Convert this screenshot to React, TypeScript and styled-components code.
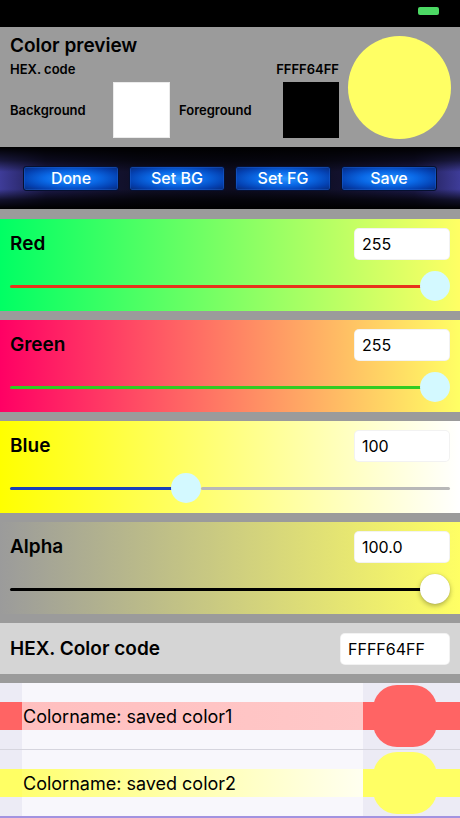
import React from "react";
import styled, { createGlobalStyle } from "styled-components";

const Global = createGlobalStyle`
  html, body { margin: 0; padding: 0; background: #9b9b9b; }
  body { font-family: Inter, "Noto Sans", sans-serif; -webkit-font-smoothing: antialiased; color: #000; }
  * { box-sizing: border-box; }
`;

const Screen = styled.div`
  width: 460px;
  height: 818px;
  overflow: hidden;
  display: flex;
  flex-direction: column;
  background: #9b9b9b;
`;

const StatusBar = styled.div`
  height: 27px;
  flex: none;
  background: #000;
  display: flex;
  justify-content: flex-end;
  align-items: flex-start;
  padding: 7px 21px 0 0;
`;

const Battery = styled.div`
  width: 21px;
  height: 8px;
  border-radius: 2px;
  background: #4cd964;
`;

const Preview = styled.section`
  height: 120px;
  flex: none;
  display: flex;
  align-items: center;
  padding: 0 9px 0 10px;
  gap: 9px;
  background: #9b9b9b;
`;

const PreviewInfo = styled.div`
  width: 329px;
  align-self: stretch;
  display: flex;
  flex-direction: column;
  padding-top: 7px;
`;

const PreviewTitle = styled.div`
  font-size: 19px;
  font-weight: 600;
  line-height: 23px;
`;

const HexRow = styled.div`
  margin-top: 4px;
  display: flex;
  justify-content: space-between;
  font-size: 13px;
  font-weight: 600;
  line-height: 16px;
`;

const SwatchRow = styled.div`
  margin-top: 5px;
  height: 56px;
  display: flex;
  align-items: center;
`;

const SwatchLabel = styled.div<{ $w: number; $ml?: number }>`
  width: ${(p) => p.$w}px;
  margin-left: ${(p) => p.$ml ?? 0}px;
  font-size: 13px;
  font-weight: 600;
`;

const Swatch = styled.div<{ $c: string; $w: number }>`
  width: ${(p) => p.$w}px;
  height: 56px;
  background: ${(p) => p.$c};
  border: 1px solid rgba(0, 0, 0, 0.08);
`;

const BigCircle = styled.div`
  width: 103px;
  height: 103px;
  border-radius: 50%;
  background: #ffff64;
`;

const Toolbar = styled.div`
  height: 62px;
  flex: none;
  display: flex;
  gap: 10px;
  padding: 19px 23px 0;
  background:
    linear-gradient(to bottom, #000 0%, rgba(0,0,0,0.6) 22%, rgba(0,0,0,0) 40%, rgba(0,0,0,0) 68%, rgba(0,0,0,0.7) 85%, #000 100%),
    linear-gradient(to right, #3e3c98 0%, #1c1a4a 10%, #100f26 30%, #0d0c20 50%, #100f26 70%, #1c1a4a 90%, #3e3c98 100%);
`;

const ToolButton = styled.button`
  width: 96px;
  height: 25px;
  padding: 0;
  border: 1px solid #061030;
  border-radius: 3px;
  background: radial-gradient(ellipse at center, #2a95ff 0%, #0a6ae8 40%, #0440b0 75%, #082a78 100%);
  box-shadow: inset 0 0 0 1px rgba(40, 110, 220, 0.35);
  color: #ffffff;
  font-family: Inter, "Noto Sans", sans-serif;
  font-size: 16px;
  font-weight: 500;
  line-height: 23px;
`;

const Content = styled.div`
  flex: 1;
  display: flex;
  flex-direction: column;
  gap: 9px;
  padding-top: 10px;
`;

const SliderSection = styled.section<{ $bg: string }>`
  height: 92px;
  flex: none;
  background: ${(p) => p.$bg};
  padding: 9px 10px 0;
  display: flex;
  flex-direction: column;
`;

const SectionHeader = styled.div`
  height: 32px;
  display: flex;
  align-items: center;
  justify-content: space-between;
`;

const Label = styled.div`
  font-size: 19px;
  font-weight: 600;
  line-height: 24px;
`;

const ValueInput = styled.input<{ $w: number }>`
  width: ${(p) => p.$w}px;
  height: 32px;
  border: 1px solid rgba(0, 0, 0, 0.05);
  border-radius: 5px;
  background: #fff;
  padding: 0 7px;
  font-family: Inter, "Noto Sans", sans-serif;
  font-size: 16px;
  color: #000;
  outline: none;
`;

const Slider = styled.div`
  margin-top: 11px;
  height: 30px;
  display: flex;
  align-items: center;
`;

const Track = styled.div<{ $c: string; $grow?: boolean }>`
  height: 3px;
  border-radius: 1.5px;
  background: ${(p) => p.$c};
  flex: ${(p) => (p.$grow ? "1" : "none")};
`;

const Thumb = styled.div<{ $c: string; $shadow?: boolean }>`
  width: 30px;
  height: 30px;
  flex: none;
  border-radius: 50%;
  background: ${(p) => p.$c};
  box-shadow: ${(p) => (p.$shadow ? "0 2px 5px rgba(0,0,0,0.3), 0 0 1px rgba(0,0,0,0.2)" : "none")};
`;

const HexSection = styled.section`
  height: 51px;
  flex: none;
  background: #d5d5d5;
  padding: 0 10px;
  display: flex;
  align-items: center;
  justify-content: space-between;
`;

const List = styled.div`
  flex: 1;
  display: flex;
  flex-direction: column;
  background: #edecf5;
  border-bottom: 2px solid #a393e0;
`;

const Row = styled.div`
  height: 66px;
  flex: none;
  display: grid;
  grid-template-columns: 22px 341px 97px;
`;

const Separator = styled.div`
  height: 1px;
  flex: none;
  background: #d6d5de;
`;

const band = (c: string) =>
  `linear-gradient(to bottom, transparent 19px, ${c} 19px, ${c} 47px, transparent 47px)`;

const EdgeCell = styled.div<{ $c: string }>`
  background: ${(p) => band(p.$c)}, #ecebf5;
`;

const NameCell = styled.div<{ $band: string }>`
  display: flex;
  align-items: center;
  padding-left: 1px;
  font-size: 18px;
  font-weight: 400;
  background:
    linear-gradient(to bottom, #f8f7fc 19px, transparent 19px, transparent 47px, #f8f7fc 47px),
    ${(p) => p.$band};
`;

const SwatchCell = styled.div<{ $c: string }>`
  padding: 2px 0 0 10px;
  background: ${(p) => band(p.$c)}, #ecebf5;
`;

const RowSwatch = styled.div<{ $c: string }>`
  width: 64px;
  height: 62px;
  border-radius: 24px;
  background: ${(p) => p.$c};
`;

type SliderDef = {
  label: string;
  value: number;
  max: number;
  text: string;
  bg: string;
  min: string;
  maxColor: string;
  thumb: string;
  shadow?: boolean;
};

const sliders: SliderDef[] = [
  { label: "Red", value: 255, max: 255, text: "255", bg: "linear-gradient(to right, #00ff64, #ffff64)", min: "#e8321c", maxColor: "#b5b5b5", thumb: "#d3f9ff" },
  { label: "Green", value: 255, max: 255, text: "255", bg: "linear-gradient(to right, #ff0064, #ffff64)", min: "#33cc22", maxColor: "#b5b5b5", thumb: "#d3f9ff" },
  { label: "Blue", value: 100, max: 255, text: "100", bg: "linear-gradient(to right, #ffff00, #ffffff)", min: "#1a40b8", maxColor: "#b8b8b8", thumb: "#d3f9ff" },
  { label: "Alpha", value: 100, max: 100, text: "100.0", bg: "linear-gradient(to right, #9b9b9b, #ffff64)", min: "#000000", maxColor: "#b5b5b5", thumb: "#ffffff", shadow: true },
];

const saved = [
  { name: "Colorname: saved color1", c: "#ff6464", band: "linear-gradient(to right, #ffbfbf, #ffc8c8)" },
  { name: "Colorname: saved color2", c: "#ffff64", band: "linear-gradient(to right, #ffff70, #fffff0)" },
];

export default function App() {
  return (
    <>
      <Global />
      <Screen>
        <StatusBar>
          <Battery />
        </StatusBar>
        <Preview>
          <PreviewInfo>
            <PreviewTitle>Color preview</PreviewTitle>
            <HexRow>
              <span>HEX. code</span>
              <span>FFFF64FF</span>
            </HexRow>
            <SwatchRow>
              <SwatchLabel $w={103}>Background</SwatchLabel>
              <Swatch $c="#ffffff" $w={57} />
              <SwatchLabel $w={104} $ml={9}>Foreground</SwatchLabel>
              <Swatch $c="#000000" $w={56} />
            </SwatchRow>
          </PreviewInfo>
          <BigCircle />
        </Preview>
        <Toolbar>
          <ToolButton>Done</ToolButton>
          <ToolButton>Set BG</ToolButton>
          <ToolButton>Set FG</ToolButton>
          <ToolButton>Save</ToolButton>
        </Toolbar>
        <Content>
          {sliders.map((s) => {
            const frac = s.value / s.max;
            return (
              <SliderSection key={s.label} $bg={s.bg}>
                <SectionHeader>
                  <Label>{s.label}</Label>
                  <ValueInput $w={96} readOnly value={s.text} />
                </SectionHeader>
                <Slider>
                  <Track $c={s.min} style={{ width: `${frac * 410 + 2}px`, marginRight: "-2px" }} />
                  <Thumb $c={s.thumb} $shadow={s.shadow} />
                  <Track $c={s.maxColor} $grow />
                </Slider>
              </SliderSection>
            );
          })}
          <HexSection>
            <Label>HEX. Color code</Label>
            <ValueInput $w={110} readOnly value="FFFF64FF" />
          </HexSection>
          <List>
            {saved.map((r, i) => (
              <React.Fragment key={r.name}>
                {i > 0 && <Separator />}
                <Row>
                  <EdgeCell $c={r.c} />
                  <NameCell $band={r.band}>{r.name}</NameCell>
                  <SwatchCell $c={r.c}>
                    <RowSwatch $c={r.c} />
                  </SwatchCell>
                </Row>
              </React.Fragment>
            ))}
          </List>
        </Content>
      </Screen>
    </>
  );
}
